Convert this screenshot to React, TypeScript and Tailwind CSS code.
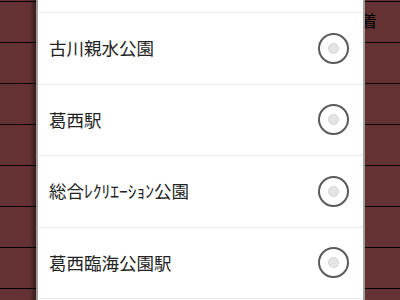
const stations = ['古川親水公園', '葛西駅', '総合ﾚｸﾘｴｰｼｮﾝ公園', '葛西臨海公園駅']

export default function App() {
  return (
    <div
      className="relative w-[400px] h-[300px] overflow-hidden bg-[#643232]"
      style={{ fontFamily: '"Noto Sans CJK JP", "Noto Sans", sans-serif' }}
    >
      {/* table rows behind the dialog */}
      <div className="flex flex-col pt-px">
        {Array.from({ length: 8 }).map((_, i) => (
          <div key={i} className="h-[41px] border-t border-black shrink-0" />
        ))}
      </div>
      <span className="absolute left-[361px] top-[12px] text-[16px] leading-none text-black">着</span>

      {/* dialog */}
      <div className="absolute left-[36px] top-[-20px] w-[329px] h-[340px] bg-white border-x-2 border-[#a0a0a0] shadow-[-3px_0_4px_rgba(0,0,0,0.45)]">
        <div className="h-[33px] border-b border-[#ececec]" />
        {stations.map((s) => (
          <div key={s} className="h-[71.5px] flex items-center justify-between pl-[11px] pr-[14px] border-b border-[#ececec]">
            <span className="text-[17.5px] text-[#222]">{s}</span>
            <span className="w-[31px] h-[31px] rounded-full border-2 border-[#5a5a5a] flex items-center justify-center">
              <span className="w-[11px] h-[11px] rounded-full bg-[#e4e4e4] border border-[#d4d4d4]" />
            </span>
          </div>
        ))}
      </div>
    </div>
  )
}
